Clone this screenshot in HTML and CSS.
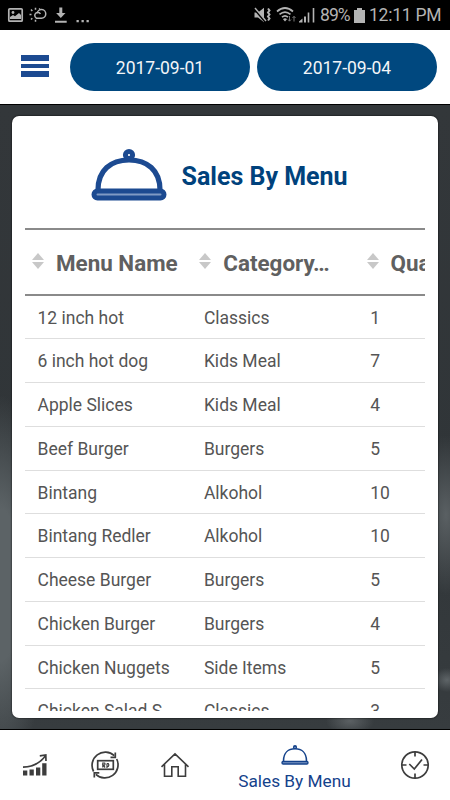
FILE: index.html
```html
<!DOCTYPE html>
<html lang="en">
<head>
  <meta charset="UTF-8" />
  <meta name="viewport" content="width=device-width, initial-scale=1.0" />
  <title>Sales By Menu</title>
  <link rel="stylesheet" href="styles.css">
</head>
<body>
  <div class="statusbar">
    <svg class="status-left" width="92" height="30" viewBox="0 0 92 30">
      <rect x="8.8" y="8.8" width="13.4" height="12.4" rx="1" fill="none" stroke="#b3b3b3" stroke-width="1.7"/>
      <circle cx="13" cy="12.5" r="1.4" fill="#b3b3b3"/>
      <path d="M10 19v-2l3-2 2 1.300 4-3.300 2 2v4z" fill="#b3b3b3"/>
      <g fill="none" stroke="#b3b3b3" stroke-width="1.5">
        <path d="M36 18.200h5.500a4.300 4.300 0 1 0-4.300-4.800M36.200 18a3 3 0 1 1 4.200-4"/>
        <path d="M35.500 7.800v2M31 9.500l1.300 1.500M29.500 14.500h2M31 19.500l1.300-1.300M35.500 19.800v2M40 8.500l-.8.800"/>
      </g>
      <path d="M59.300 7.500h3v5.500h3.200l-4.700 5-4.700-5h3.200z M55 20.800h11.700v2H55z" fill="#b3b3b3"/>
      <path d="M76.500 20h2.300v2.300h-2.300z M81.500 20h2.300v2.300h-2.300z M86.500 20h2.300v2.300h-2.300z" fill="#b3b3b3"/>
    </svg>
    <div class="status-right">
      <svg width="63" height="30" viewBox="253 0 63 30">
        <path d="M254.500 12.500h3.500l6-4.800v14.600l-6-4.800h-3.500z" fill="#b3b3b3"/>
        <path d="M254.500 9l10.500 12.500" stroke="#000" stroke-width="2"/>
        <path d="M255 8l11 13" stroke="#b3b3b3" stroke-width="1.400"/>
        <path d="M268 8.500l1.500 2-1.500 2 1.500 2-1.500 2 1.500 2-1.500 2" fill="none" stroke="#b3b3b3" stroke-width="2"/>
        <path d="M277 11.500q8-7 16 0M279.500 14.400q5.500-4.600 11 0M282 17.200q3-2.700 6 0" fill="none" stroke="#b3b3b3" stroke-width="1.700"/>
        <path d="M283 19.200a2.500 2.500 0 0 1 4 0l-2 2.300z" fill="#b3b3b3"/>
        <path d="M289.500 16v5M288 19.500l1.500 1.700 1.500-1.700M294 21.500v-5M292.500 18l1.500-1.700 1.500 1.700" fill="none" stroke="#777" stroke-width="1"/>
        <path d="M299 22.500v-1l3.500-3v4z M304 16.500h2v6h-2z" fill="#b3b3b3"/>
        <path d="M308.500 12.500v10M313.500 8v14.500" stroke="#b3b3b3" stroke-width="1.600"/>
      </svg>
      <span class="percent">89%</span>
      <svg class="battery" width="11" height="15" viewBox="0 0 11 15"><path d="M3 0h5v2h3v13H0V2h3z" fill="#b3b3b3"/></svg>
      <span class="clock">12:11 PM</span>
    </div>
  </div>

  <header class="toolbar">
    <div class="burger"><i></i><i></i><i></i></div>
    <div class="date">2017-09-01</div>
    <div class="date">2017-09-04</div>
  </header>

  <main class="content">
    <section class="card">
      <div class="card-title">
        <svg width="76" height="54" viewBox="0 0 76 54" fill="none" stroke="#1c4a91">
          <rect x="3" y="43" width="70" height="7" rx="3.500" fill="#7f9ac4" stroke-width="5"/>
          <path d="M7 42C7 22 20 12 38 12S69 22 69 42" stroke-width="5.200"/>
          <circle cx="38" cy="7" r="3.600" stroke-width="5"/>
        </svg>
        <h1>Sales By Menu</h1>
      </div>
      <div class="table">
        <div class="row head">
          <div class="cell"><span class="sort"></span>Menu Name</div>
          <div class="cell"><span class="sort"></span>Category…</div>
          <div class="cell"><span class="sort"></span>Quantity</div>
        </div>
        <div class="row"><div class="cell">12 inch hot</div><div class="cell">Classics</div><div class="cell">1</div></div>
        <div class="row"><div class="cell">6 inch hot dog</div><div class="cell">Kids Meal</div><div class="cell">7</div></div>
        <div class="row"><div class="cell">Apple Slices</div><div class="cell">Kids Meal</div><div class="cell">4</div></div>
        <div class="row"><div class="cell">Beef Burger</div><div class="cell">Burgers</div><div class="cell">5</div></div>
        <div class="row"><div class="cell">Bintang</div><div class="cell">Alkohol</div><div class="cell">10</div></div>
        <div class="row"><div class="cell">Bintang Redler</div><div class="cell">Alkohol</div><div class="cell">10</div></div>
        <div class="row"><div class="cell">Cheese Burger</div><div class="cell">Burgers</div><div class="cell">5</div></div>
        <div class="row"><div class="cell">Chicken Burger</div><div class="cell">Burgers</div><div class="cell">4</div></div>
        <div class="row"><div class="cell">Chicken Nuggets</div><div class="cell">Side Items</div><div class="cell">5</div></div>
        <div class="row"><div class="cell">Chicken Salad S</div><div class="cell">Classics</div><div class="cell">3</div></div>
      </div>
    </section>
  </main>

  <nav class="tabs">
    <div class="tab">
      <svg width="30" height="30" viewBox="0 0 30 30">
        <path d="M3 20.500h4.300v5H3z M9.500 19.500h4.300v6H9.500z M16 17.500h4.300v8H16z M22.200 13.300h4.300v12.200h-4.300z" fill="#3d3d3d"/>
        <path d="M3 17.200C12 17 19.500 13.500 25.500 6M19.800 5.800l6-.8.200 6" fill="none" stroke="#3d3d3d" stroke-width="1.700"/>
      </svg>
    </div>
    <div class="tab">
      <svg width="30" height="30" viewBox="0 0 30 30" fill="none" stroke="#3d3d3d" stroke-width="1.700">
        <path d="M3.600 21.500A13.200 13.200 0 0 1 24.300 5.700M26.700 9A13.200 13.200 0 0 1 5.800 24.400"/>
        <path d="M25.300 2.500v4.800h-4.800M4.300 27.500v-4.700h5"/>
        <rect x="7.700" y="10.700" width="15.600" height="8.600"/>
        <path d="M12.800 12.500v5M12.800 13h1.800q1 1.200 0 2.200h-1.500l2 2.300M17 13.500v4.500M17 13.500h1.300q1.200 1.500 0 3h-1" stroke-width="1.200"/>
      </svg>
    </div>
    <div class="tab">
      <svg width="30" height="30" viewBox="0 0 30 30" fill="none" stroke="#3d3d3d" stroke-width="1.600">
        <path d="M1.500 16.800L15 3.800l13.500 13M4.500 14.500v11.700h7.300v-9.400h6.400v9.400h7.300V14.500"/>
      </svg>
    </div>
    <div class="tab active">
      <svg width="28" height="22" viewBox="0 0 28 22" fill="none" stroke="#14428b">
        <rect x="1" y="17.500" width="26" height="2.500" rx="1.200" fill="#7f9ac4" stroke-width="1.400"/>
        <path d="M2.500 17C2.500 8.500 7.500 4.800 14 4.800S25.500 8.500 25.500 17" stroke-width="1.600"/>
        <circle cx="14" cy="3.200" r="1.300" stroke-width="1.600"/>
      </svg>
      <span>Sales By Menu</span>
    </div>
    <div class="tab">
      <svg width="30" height="30" viewBox="0 0 30 30" fill="none" stroke="#3d3d3d" stroke-width="1.700">
        <circle cx="15" cy="15" r="13.200"/>
        <path d="M15 1.500v5M15 28.500v-5M1.500 15h5M28.500 15h-5M9.300 14l5 5L22 9.500"/>
      </svg>
    </div>
  </nav>
</body>
</html>
```
FILE: styles.css
```css
* { box-sizing: border-box; }
body {
  margin: 0;
  width: 450px;
  height: 800px;
  display: flex;
  flex-direction: column;
  overflow: hidden;
  background: #fff;
  font-family: Roboto, sans-serif;
}
svg { display: block; flex: none; }

.statusbar {
  height: 30px;
  flex: none;
  display: flex;
  justify-content: space-between;
  background: #000;
  color: #b3b3b3;
  font-size: 17.5px;
}
.status-right {
  display: flex;
  align-items: center;
  width: 197px;
}
.percent { margin-left: 4px; width: 34px; letter-spacing: -0.9px; }
.battery { margin-top: 1px; }
.clock { margin-left: 4px; white-space: nowrap; letter-spacing: -0.25px; }

.toolbar {
  height: 74px;
  flex: none;
  display: flex;
  align-items: center;
  padding: 0 13px 0 21px;
  gap: 7px;
}
.burger {
  display: flex;
  flex-direction: column;
  gap: 3px;
  width: 28px;
  margin: -2px 14px 0 0;
}
.burger i { height: 6px; background: #1c4a91; }
.burger i:nth-child(2) { height: 4px; }
.date {
  flex: 1;
  height: 48px;
  margin-top: -1px;
  line-height: 50px;
  border-radius: 24px;
  background: #00487f;
  color: #f2f5f8;
  text-align: center;
  font-size: 17.5px;
}

.content {
  height: 626px;
  flex: none;
  padding: 11px 12px 12px;
  border-top: 1px solid #000;
  border-bottom: 1px solid #000;
  background:
    radial-gradient(ellipse 14px 12px at 447px 575px, #5e6467, transparent),
    radial-gradient(ellipse 24px 14px at 350px 616px, #5b6063, transparent),
    radial-gradient(ellipse 30px 80px at 446px 410px, #5a6063, transparent),
    radial-gradient(ellipse 50px 190px at 0 480px, #5c6366 40%, transparent),
    linear-gradient(#33373a, #303538 60%, #373c3f);
}
.card {
  height: 602px;
  display: flex;
  flex-direction: column;
  padding: 0 13px 7px;
  border-radius: 7px;
  background: #fff;
  box-shadow: 0 0 2px #000;
}
.card-title {
  height: 111.500px;
  flex: none;
  display: flex;
  align-items: center;
  padding: 7px 0 0 66px;
  gap: 14.500px;
}
.card-title h1 {
  margin: 2px 0 0;
  font-size: 25px;
  font-weight: 700;
  color: #00427c;
  white-space: nowrap;
}

.table {
  flex: 1;
  min-height: 0;
  overflow: hidden;
  color: #555;
}
.row {
  display: flex;
  width: 500px;
  height: 43.750px;
  border-bottom: 1px solid #dedede;
}
.cell {
  flex: none;
  width: 166.400px;
  padding-left: 12.500px;
  line-height: 45px;
  font-size: 17.500px;
  white-space: nowrap;
}
.head {
  height: 68px;
  border-top: 2px solid #8a8a8a;
  border-bottom: 2px solid #8a8a8a;
}
.head .cell {
  display: flex;
  align-items: center;
  width: 167.300px;
  padding: 3px 0 0 7px;
  gap: 12px;
  font-size: 22.400px;
  font-weight: 700;
  color: #606060;
}
.sort {
  display: flex;
  flex-direction: column;
  gap: 2px;
  margin-top: -5px;
}
.sort::before, .sort::after {
  content: "";
  border: 6px solid transparent;
}
.sort::before { border-top: 0; border-bottom: 7px solid #c8c8c8; }
.sort::after { border-bottom: 0; border-top: 7px solid #c8c8c8; }

.tabs {
  flex: 1;
  display: grid;
  grid-template-columns: 70px 70px 70px 170px 70px;
}
.tab {
  display: flex;
  flex-direction: column;
  align-items: center;
  justify-content: center;
  padding-right: 1px;
}
.tab:last-child { padding: 0; }
.tab.active {
  gap: 5px;
  padding-top: 4px;
  color: #14428b;
  font-size: 17.250px;
}
```
